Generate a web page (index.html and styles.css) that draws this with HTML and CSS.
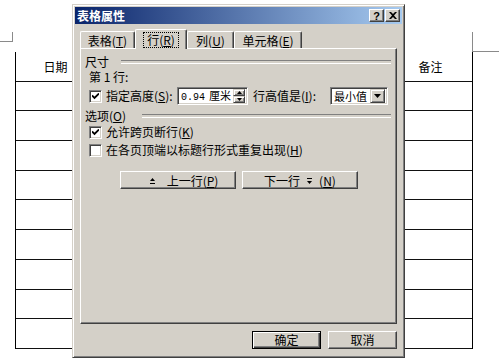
FILE: index.html
```html
<!DOCTYPE html>
<html lang="zh-CN">
<head>
    <meta charset="UTF-8">
    <meta name="viewport" content="width=device-width, initial-scale=1.0">
    <title>表格属性</title>
    <link rel="stylesheet" href="styles.css">
</head>
<body>
    <div class="page">
        <div class="marks">
            <span class="mark-left"></span>
            <span class="mark-right"></span>
        </div>

        <div class="doc-table">
            <div class="cell">日期</div><div class="cell"></div><div class="cell">备注</div>
            <div class="cell"></div><div class="cell"></div><div class="cell"></div>
            <div class="cell"></div><div class="cell"></div><div class="cell"></div>
            <div class="cell"></div><div class="cell"></div><div class="cell"></div>
            <div class="cell"></div><div class="cell"></div><div class="cell"></div>
            <div class="cell"></div><div class="cell"></div><div class="cell"></div>
            <div class="cell"></div><div class="cell"></div><div class="cell"></div>
            <div class="cell"></div><div class="cell"></div><div class="cell"></div>
            <div class="cell"></div><div class="cell"></div><div class="cell"></div>
            <div class="cell"></div><div class="cell"></div><div class="cell"></div>
        </div>
    </div>

    <div class="dialog">
        <div class="titlebar">
            <span class="title">表格属性</span>
            <span class="title-btn help">?</span>
            <span class="title-btn close">
                <svg width="8" height="7" viewBox="0 0 8 7"><path d="M0 0h2l2 2 2-2h2L5 3.5 8 7H6L4 5 2 7H0l3-3.5z" fill="#000"/></svg>
            </span>
        </div>

        <div class="tabs">
            <div class="tab tab-table">表格(<u>T</u>)</div>
            <div class="tab tab-row active"><span class="focus">行(<u>R</u>)</span></div>
            <div class="tab tab-col">列(<u>U</u>)</div>
            <div class="tab tab-cell">单元格(<u>E</u>)</div>
        </div>

        <div class="panel">
            <div class="legend">尺寸</div>
            <div class="line indent">第 1 行:</div>

            <div class="line indent height-row">
                <span class="cb checked">
                    <svg width="7" height="7" viewBox="0 0 7 7"><path d="M0 2.5l2.5 2.5L7 0.5" fill="none" stroke="#000" stroke-width="1.8"/></svg>
                </span>
                <span class="field-label">指定高度(<u>S</u>):</span>
                <span class="input">
                    <span class="input-text"><span class="num">0.94</span>厘米</span>
                    <span class="spin">
                        <span class="spin-btn"><svg width="5" height="3" viewBox="0 0 5 3"><path d="M2.5 0L5 3H0z" fill="#000"/></svg></span>
                        <span class="spin-btn"><svg width="5" height="3" viewBox="0 0 5 3"><path d="M0 0h5L2.5 3z" fill="#000"/></svg></span>
                    </span>
                </span>
                <span class="field-label rule-label">行高值是(<u>I</u>):</span>
                <span class="select">
                    <span class="input-text">最小值</span>
                    <span class="drop-btn"><svg width="7" height="4" viewBox="0 0 7 4"><path d="M0 0h7L3.5 4z" fill="#000"/></svg></span>
                </span>
            </div>

            <div class="legend options">选项(<u>O</u>)</div>

            <div class="line indent check-row first">
                <span class="cb checked">
                    <svg width="7" height="7" viewBox="0 0 7 7"><path d="M0 2.5l2.5 2.5L7 0.5" fill="none" stroke="#000" stroke-width="1.8"/></svg>
                </span>
                <span>允许跨页断行(<u>K</u>)</span>
            </div>
            <div class="line indent check-row">
                <span class="cb"></span>
                <span>在各页顶端以标题行形式重复出现(<u>H</u>)</span>
            </div>

            <div class="nav-row">
                <button class="btn nav-btn">
                    <svg class="arrow" width="5" height="6" viewBox="0 0 5 6"><path d="M2.5 0L5 3H0z" fill="#000"/><rect y="5" width="5" height="1" fill="#000"/></svg>
                    上一行(<u>P</u>)
                </button>
                <button class="btn nav-btn">
                    下一行
                    <svg class="arrow" width="5" height="6" viewBox="0 0 5 6"><rect width="5" height="1" fill="#000"/><path d="M0 3h5L2.5 6z" fill="#000"/></svg>
                    (<u>N</u>)
                </button>
            </div>
        </div>

        <div class="footer">
            <button class="btn default">确定</button>
            <button class="btn">取消</button>
        </div>
    </div>
</body>
</html>
```

FILE: styles.css
```css
* {
    margin: 0;
    padding: 0;
    box-sizing: border-box;
}

body {
    font-family: "Noto Sans CJK SC", "Liberation Sans", sans-serif;
    font-size: 12px;
    line-height: 14px;
    color: #000;
    background: #fff;
    width: 499px;
    height: 363px;
    overflow: hidden;
    position: relative;
}

u {
    text-decoration: underline;
    text-underline-offset: 1px;
}

/* document behind the dialog */
.page {
    padding-top: 32px;
}

.marks {
    display: flex;
    justify-content: space-between;
    height: 20px;
}

.mark-left {
    width: 13px;
    height: 10px;
    border-right: 1px solid #8a8a8a;
    border-bottom: 1px solid #8a8a8a;
}

.mark-right {
    width: 27px;
    height: 20px;
    border-left: 1px solid #8a8a8a;
    border-bottom: 1px solid #8a8a8a;
}

.doc-table {
    display: grid;
    grid-template-columns: 80px 1fr 83px;
    grid-auto-rows: 29.7px;
    width: 458px;
    margin-left: 15px;
    border-left: 1px solid #000;
    border-right: 1px solid #000;
}

.cell {
    display: flex;
    align-items: center;
    justify-content: center;
    border-bottom: 1px solid #111;
    border-right: 1px solid #111;
    padding-top: 1px;
}

.cell:nth-child(3n) {
    border-right: none;
}

/* dialog */
.dialog {
    position: absolute;
    left: 72px;
    top: 4px;
    width: 333px;
    height: 354px;
    background: #d4d0c8;
    border: 1px solid;
    border-color: #d4d0c8 #404040 #404040 #d4d0c8;
    box-shadow: inset 1px 1px #fff, inset -1px -1px #808080;
    padding: 2px;
    display: flex;
    flex-direction: column;
}

.titlebar {
    height: 17px;
    background: linear-gradient(to right, #0a246a, #a6caf0);
    display: flex;
    align-items: center;
    padding: 0 2px 0 2px;
}

.title {
    flex: 1;
    color: #fff;
    font-weight: bold;
    font-size: 12px;
}

.title-btn {
    width: 15px;
    height: 13px;
    background: #d4d0c8;
    border: 1px solid;
    border-color: #fff #404040 #404040 #fff;
    box-shadow: inset -1px -1px #808080;
    display: flex;
    align-items: center;
    justify-content: center;
    font-family: "Liberation Sans", sans-serif;
    font-weight: bold;
    font-size: 11px;
}

.title-btn.help {
    margin-right: 1px;
}

.tabs {
    display: flex;
    align-items: flex-end;
    height: 19px;
    margin: 5px 5px 0;
}

.tab {
    height: 17px;
    border: 1px solid;
    border-bottom: none;
    border-color: #fff #404040 #404040 #fff;
    border-radius: 2px 2px 0 0;
    box-shadow: inset -1px 0 #808080;
    display: flex;
    align-items: center;
    justify-content: center;
    padding-top: 2px;
}

.tab-table { width: 55px; }
.tab-row { width: 52px; }
.tab-col { width: 47px; }
.tab-cell { width: 68px; }

.tab.active {
    height: 20px;
    margin-bottom: -1px;
    background: #d4d0c8;
    position: relative;
    z-index: 1;
    padding-top: 0;
}

.focus {
    outline: 1px dotted #000;
    outline-offset: 0;
    padding: 0 3px;
}

.panel {
    height: 276px;
    margin: 0 5px;
    border: 1px solid;
    border-color: #fff #404040 #404040 #fff;
    box-shadow: inset -1px -1px #808080;
    padding: 6px 5px 0 4px;
    display: flex;
    flex-direction: column;
}

.legend {
    display: flex;
    align-items: center;
    height: 14px;
}

.legend::after {
    content: "";
    flex: 1;
    height: 2px;
    margin-left: 12px;
    border-top: 1px solid #808080;
    border-bottom: 1px solid #fff;
}

.legend.options {
    margin-top: 4px;
}

.legend.options::after {
    margin-left: 16px;
}

.line {
    display: flex;
    align-items: center;
    height: 14px;
    margin-top: 1px;
}

.indent {
    margin-left: 4px;
}

.height-row {
    height: 18px;
    margin-top: 3px;
}

.check-row.first {
    margin-top: 2px;
}

.check-row {
    margin-top: 4px;
}

.cb {
    width: 13px;
    height: 13px;
    flex: none;
    background: #fff;
    border: 1px solid;
    border-color: #808080 #fff #fff #808080;
    box-shadow: inset 1px 1px #404040, inset -1px -1px #d4d0c8;
    display: flex;
    align-items: center;
    justify-content: center;
    margin-right: 4px;
}

.field-label {
    width: 71px;
    flex: none;
}

.rule-label {
    width: 77px;
    margin-left: 5px;
}

.input,
.select {
    height: 18px;
    background: #fff;
    border: 1px solid;
    border-color: #808080 #fff #fff #808080;
    box-shadow: inset 1px 1px #404040, inset -1px -1px #d4d0c8;
    display: flex;
    align-items: center;
    padding: 2px;
    flex: none;
}

.input {
    width: 71px;
}

.select {
    width: 58px;
}

.input-text {
    flex: 1;
    padding-left: 1px;
    white-space: nowrap;
    font-size: 11px;
}

.num {
    font-family: "Liberation Mono", monospace;
    font-size: 10px;
    margin-right: 4px;
}

.spin {
    display: flex;
    flex-direction: column;
    width: 12px;
    height: 14px;
    flex: none;
}

.spin-btn,
.drop-btn {
    flex: 1;
    background: #d4d0c8;
    border: 1px solid;
    border-color: #d4d0c8 #404040 #404040 #d4d0c8;
    box-shadow: inset 1px 1px #fff, inset -1px -1px #808080;
    display: flex;
    align-items: center;
    justify-content: center;
}

.drop-btn {
    flex: none;
    width: 15px;
    height: 14px;
}

.nav-row {
    display: flex;
    gap: 6px;
    margin: 14px 0 0 35px;
}

.btn {
    height: 18px;
    background: #d4d0c8;
    border: 1px solid;
    border-color: #fff #404040 #404040 #fff;
    box-shadow: inset -1px -1px #808080;
    display: flex;
    align-items: center;
    justify-content: center;
    font: inherit;
    color: #000;
}

.nav-btn {
    width: 116px;
    padding-top: 1px;
}

.arrow {
    margin: 0 12px;
}

.nav-btn:last-child .arrow {
    margin: 0 7px;
}

.footer {
    display: flex;
    justify-content: flex-end;
    gap: 7px;
    margin: 7px 5px 0;
}

.footer .btn {
    width: 69px;
}

.btn.default {
    border-color: #000;
    box-shadow: inset 1px 1px #fff, inset -1px -1px #404040, inset -2px -2px #808080;
}
```
